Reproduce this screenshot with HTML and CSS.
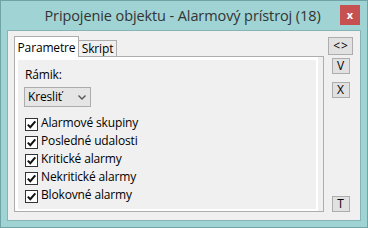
FILE: index.html
```html
<!DOCTYPE html>
<html>
<head>
<meta charset="utf-8">
<link rel="stylesheet" href="styles.css">
</head>
<body>
<div class="window">
  <div class="titlebar">
    <span class="title">Pripojenie objektu - Alarmový prístroj (18)</span>
    <button class="close">x</button>
  </div>
  <div class="client">
    <div class="tabs">
      <div class="tabstrip">
        <div class="tab tab-active">Parametre</div>
        <div class="tab tab-skript">Skript</div>
      </div>
      <div class="page">
        <div class="inner">
          <div class="label">Rámik:</div>
          <div class="select">
            <span class="select-text">Kresliť</span>
            <svg class="chevron" width="8" height="5" viewBox="0 0 8 5"><path d="M0.5 0.5 L4 4 L7.5 0.5" fill="none" stroke="#555" stroke-width="1.4"/></svg>
          </div>
          <ul class="checks">
            <li class="check"><span class="box"><svg width="11" height="11" viewBox="0 0 11 11"><path d="M1.8 5.6 L4.3 8.2 L9.3 2.4" fill="none" stroke="#111" stroke-width="2"/></svg></span>Alarmové skupiny</li>
            <li class="check"><span class="box"><svg width="11" height="11" viewBox="0 0 11 11"><path d="M1.8 5.6 L4.3 8.2 L9.3 2.4" fill="none" stroke="#111" stroke-width="2"/></svg></span>Posledné udalosti</li>
            <li class="check"><span class="box"><svg width="11" height="11" viewBox="0 0 11 11"><path d="M1.8 5.6 L4.3 8.2 L9.3 2.4" fill="none" stroke="#111" stroke-width="2"/></svg></span>Kritické alarmy</li>
            <li class="check"><span class="box"><svg width="11" height="11" viewBox="0 0 11 11"><path d="M1.8 5.6 L4.3 8.2 L9.3 2.4" fill="none" stroke="#111" stroke-width="2"/></svg></span>Nekritické alarmy</li>
            <li class="check"><span class="box"><svg width="11" height="11" viewBox="0 0 11 11"><path d="M1.8 5.6 L4.3 8.2 L9.3 2.4" fill="none" stroke="#111" stroke-width="2"/></svg></span>Blokovné alarmy</li>
          </ul>
        </div>
      </div>
    </div>
    <div class="side">
      <button class="btn btn-wide">&lt;&gt;</button>
      <button class="btn btn-v">V</button>
      <button class="btn btn-x">X</button>
      <button class="btn btn-t">T</button>
    </div>
  </div>
</div>
</body>
</html>
```

FILE: styles.css
```css
html, body {
  margin: 0;
  padding: 0;
}
body {
  width: 368px;
  height: 228px;
  overflow: hidden;
  font-family: "Open Sans", "Noto Sans", sans-serif;
  font-size: 12px;
  letter-spacing: -0.15px;
  color: #000;
}
.window {
  box-sizing: border-box;
  width: 368px;
  height: 228px;
  background: #9fd3d4;
  border: 1px solid #6fa3a5;
  display: flex;
  flex-direction: column;
}
.titlebar {
  height: 29px;
  flex: none;
  display: grid;
  grid-template-columns: 1fr auto 1fr;
  align-items: start;
}
.title {
  grid-column: 2;
  font-size: 14.5px;
  letter-spacing: -0.1px;
  line-height: 20px;
  padding-top: 5px;
  padding-right: 3px;
  color: #333;
  white-space: nowrap;
}
.close {
  grid-column: 3;
  justify-self: end;
  margin: 4px 7px 0 0;
  width: 20px;
  height: 20px;
  padding: 0;
  border: 0;
  background: #c75050;
  color: #fff;
  font-family: "Open Sans", sans-serif;
  font-weight: bold;
  font-size: 11px;
  line-height: 18px;
}
.client {
  flex: 1;
  margin: 0 6px 6px;
  border: 1px solid #86b3b4;
  background: #f0f0f0;
  display: flex;
  min-height: 0;
}
.tabs {
  margin: 5px 0 0 6px;
  display: flex;
  flex-direction: column;
}
.tabstrip {
  display: flex;
  align-items: flex-end;
  height: 21px;
  margin-bottom: -1px;
  position: relative;
  z-index: 1;
}
.tab {
  box-sizing: border-box;
  border: 1px solid #adadad;
  border-bottom: 0;
  text-align: center;
  white-space: nowrap;
}
.tab-active {
  width: 65px;
  height: 21px;
  background: #fff;
  line-height: 19px;
  padding-top: 1px;
  position: relative;
  z-index: 2;
}
.tab-skript {
  width: 39px;
  height: 16px;
  margin-left: -1px;
  margin-bottom: 1px;
  background: #f0f0f0;
  line-height: 15px;
}
.page {
  box-sizing: border-box;
  width: 310px;
  height: 156px;
  border: 1px solid #adadad;
  background: #f0f0f0;
  padding-right: 5px;
}
.inner {
  box-sizing: border-box;
  height: 100%;
  border-style: solid;
  border-color: #fff;
  border-width: 3px 2px 2px 3px;
  padding: 7px 0 0 6px;
}
.label {
  line-height: 16px;
  margin-left: 1px;
}
.select {
  box-sizing: border-box;
  margin-top: 4px;
  width: 67px;
  height: 20px;
  border: 1px solid #acacac;
  background: #e5e5e5;
  display: flex;
  align-items: center;
  justify-content: space-between;
  padding: 0 4px 1px 3px;
}
.select-text {
  line-height: 16px;
}
.chevron {
  display: block;
  margin-top: 1px;
}
.checks {
  list-style: none;
  margin: 7px 0 0;
  padding: 0;
}
.check {
  display: flex;
  align-items: flex-start;
  height: 18px;
  line-height: 18px;
  white-space: nowrap;
}
.box {
  box-sizing: border-box;
  width: 13px;
  height: 13px;
  margin: 4px 3px 0 1px;
  border: 1px solid #333;
  background: #fff;
  display: flex;
}
.box svg {
  display: block;
}
.side {
  margin: 6px 0 8px 4px;
  width: 25px;
  display: flex;
  flex-direction: column;
  align-items: center;
}
.btn {
  box-sizing: border-box;
  padding: 0;
  border: 1px solid #adadad;
  background: #e1e1e1;
  color: #000;
  font-family: "Open Sans", sans-serif;
  font-size: 12px;
  line-height: 14px;
}
.btn-wide {
  width: 25px;
  height: 18px;
  letter-spacing: 1px;
  padding-left: 1px;
}
.btn-v {
  width: 18px;
  height: 16px;
  margin-top: 3px;
}
.btn-x {
  width: 18px;
  height: 16px;
  margin-top: 8px;
}
.btn-t {
  width: 18px;
  height: 16px;
  margin-top: auto;
}
```
